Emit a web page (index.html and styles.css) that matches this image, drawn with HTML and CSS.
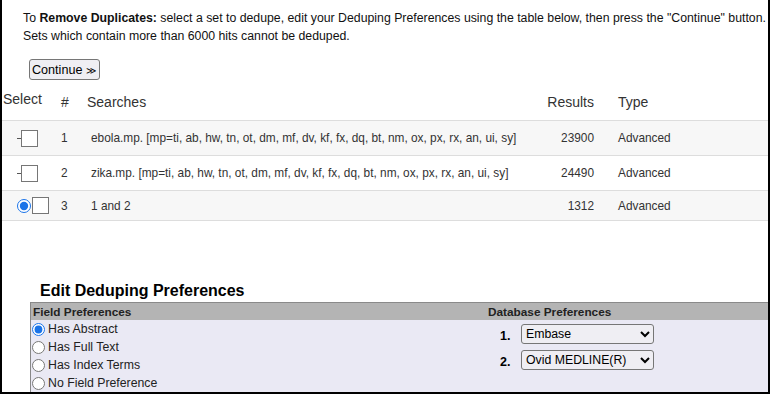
FILE: index.html
```html
<!DOCTYPE html>
<html>
<head>
    <link rel="stylesheet" href="styles.css">
</head>
<body>
    <div class="frame">
        <p class="intro">To <b>Remove Duplicates:</b> select a set to dedupe, edit your Deduping Preferences using the table below, then press the "Continue" button.<br>Sets which contain more than 6000 hits cannot be deduped.</p>

        <div class="actions">
            <button class="continue">Continue <span class="arrows">&#8811;</span></button>
        </div>

        <div class="history">
            <div class="hrow head">
                <div class="c-select">Select</div>
                <div class="c-num">#</div>
                <div class="c-search">Searches</div>
                <div class="c-results">Results</div>
                <div class="c-type">Type</div>
            </div>
            <div class="hrow odd">
                <div class="c-select"><span class="dash"></span><span class="box"></span></div>
                <div class="c-num">1</div>
                <div class="c-search">ebola.mp. [mp=ti, ab, hw, tn, ot, dm, mf, dv, kf, fx, dq, bt, nm, ox, px, rx, an, ui, sy]</div>
                <div class="c-results">23900</div>
                <div class="c-type">Advanced</div>
            </div>
            <div class="hrow">
                <div class="c-select"><span class="dash"></span><span class="box"></span></div>
                <div class="c-num">2</div>
                <div class="c-search">zika.mp. [mp=ti, ab, hw, tn, ot, dm, mf, dv, kf, fx, dq, bt, nm, ox, px, rx, an, ui, sy]</div>
                <div class="c-results">24490</div>
                <div class="c-type">Advanced</div>
            </div>
            <div class="hrow odd short">
                <div class="c-select"><input type="radio" class="set-radio" name="set" checked><span class="box"></span></div>
                <div class="c-num">3</div>
                <div class="c-search">1 and 2</div>
                <div class="c-results">1312</div>
                <div class="c-type">Advanced</div>
            </div>
        </div>

        <h2 class="prefs-title">Edit Deduping Preferences</h2>
        <div class="prefs">
            <div class="prefs-head">
                <div class="col-field">Field Preferences</div>
                <div class="col-db">Database Preferences</div>
            </div>
            <div class="prefs-body">
                <div class="col-field">
                    <label class="opt"><input type="radio" name="field" checked> Has Abstract</label>
                    <label class="opt"><input type="radio" name="field"> Has Full Text</label>
                    <label class="opt"><input type="radio" name="field"> Has Index Terms</label>
                    <label class="opt"><input type="radio" name="field"> No Field Preference</label>
                </div>
                <div class="col-db">
                    <div class="db-row">
                        <span class="db-num">1.</span>
                        <select class="db-select">
                            <option>Embase</option>
                        </select>
                    </div>
                    <div class="db-row">
                        <span class="db-num">2.</span>
                        <select class="db-select">
                            <option>Ovid MEDLINE(R)</option>
                        </select>
                    </div>
                </div>
            </div>
        </div>
    </div>
</body>
</html>
```

FILE: styles.css
```css
body {
    margin: 0;
    font-family: "Liberation Sans", Arial, sans-serif;
    background-color: #fff;
}

.frame {
    height: 394px;
    box-sizing: border-box;
    border-left: 2px solid #000;
    border-right: 2px solid #000;
    border-bottom: 2px solid #000;
    overflow: hidden;
}

.intro {
    margin: 9px 0 0 21px;
    font-size: 12.3px;
    line-height: 18px;
    color: #111;
    white-space: nowrap;
}

.actions {
    margin: 14px 0 0 27px;
}

.continue {
    font-family: "Liberation Sans", Arial, sans-serif;
    font-size: 12.6px;
    height: 21px;
    padding: 0 3px 0 2px;
    color: #000;
    background-color: #efeef3;
    border: 1px solid #767676;
    border-radius: 3px;
}

.arrows {
    font-size: 10px;
}

/* search history table */
.history {
    color: #333;
}

.hrow {
    display: grid;
    grid-template-columns: 53px 30px 1fr 70px 162px;
    align-items: center;
    height: 35px;
    box-sizing: border-box;
    border-top: 1px solid #ddd;
    font-size: 11.85px;
}

.hrow.odd {
    background-color: #f7f7f7;
}

.hrow.short {
    height: 31px;
    border-bottom: 1px solid #ddd;
}

.hrow.head {
    height: 40px;
    border-top: none;
    align-items: start;
    font-size: 14px;
    color: #333;
}

.head > div {
    padding-top: 14px;
}

.head .c-select {
    padding-top: 11px;
    padding-left: 1px;
}

.c-select {
    display: flex;
    align-items: center;
    padding-left: 15px;
}

.head .c-select {
    display: block;
}

.c-num {
    padding-left: 6px;
}

.c-search {
    padding-left: 6px;
    white-space: nowrap;
}

.head .c-search {
    padding-left: 2px;
}

.c-results {
    text-align: right;
    padding-right: 12px;
}

.c-type {
    padding-left: 12px;
}

.dash {
    display: inline-block;
    width: 4px;
    height: 1px;
    margin-top: 1px;
    background-color: #555;
}

.box {
    display: inline-block;
    width: 15px;
    height: 15px;
    border: 1px solid #767676;
    background-color: #fff;
}

.set-radio {
    width: 14px;
    height: 14px;
    margin: 0 1px 0 0;
    accent-color: #1a73e8;
}

/* deduping preferences */
.prefs-title {
    margin: 60px 0 0 38px;
    font-size: 16px;
    line-height: 19px;
    font-weight: bold;
    color: #000;
}

.prefs {
    margin: 2px 0 0 28px;
    border-left: 1px solid #888;
    font-size: 11.8px;
    color: #000;
}

.prefs-head {
    display: flex;
    height: 17px;
    align-items: center;
    background-color: #b4b4b4;
    border-top: 1px solid #8a8a8a;
    font-weight: bold;
    color: #222;
}

.prefs-head .col-field {
    padding-left: 2px;
}

.prefs-body {
    display: flex;
    height: 80px;
    background-color: #eae9f4;
}

.col-field {
    width: 455px;
}

.col-db {
    flex: 1;
}

.opt {
    display: flex;
    align-items: center;
    height: 18px;
    font-size: 12.3px;
    color: #222;
}

.opt input {
    width: 13px;
    height: 13px;
    margin: 0 3px 0 1px;
    accent-color: #1a73e8;
}

.prefs-body .col-db {
    padding-top: 4px;
}

.db-row {
    display: flex;
    align-items: center;
    height: 20px;
    margin-bottom: 6px;
    padding-left: 14px;
}

.db-num {
    width: 21px;
    font-weight: bold;
    font-size: 12.5px;
    margin-top: 3px;
}

.db-select {
    width: 133px;
    height: 20px;
    font-family: "Liberation Sans", Arial, sans-serif;
    font-size: 12.3px;
    color: #000;
    background-color: #efeef3;
    border: 1px solid #767676;
    border-radius: 3px;
}
```
